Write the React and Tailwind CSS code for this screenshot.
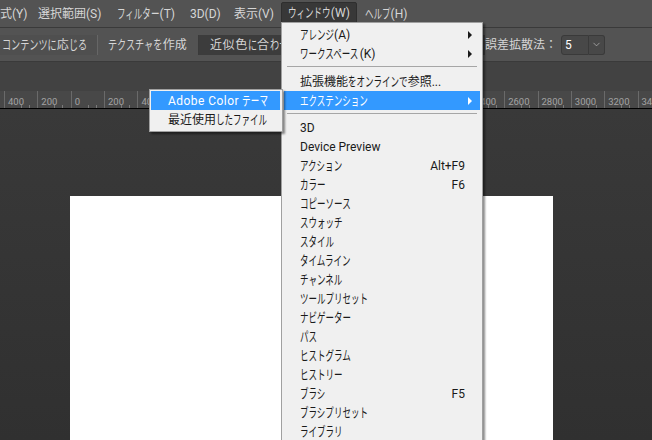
import { ChevronDown } from 'lucide-react'

const font = { fontFamily: 'Roboto, "Noto Sans CJK JP", sans-serif' }

const topMenus = [
  { label: '式(Y)', width: 'w-[38px]' },
  { label: '選択範囲(S)', width: 'w-[79px]' },
  { label: 'フィルター(T)', width: 'w-[73px]' },
  { label: '3D(D)', width: 'w-[44px]' },
  { label: '表示(V)', width: 'w-[47px]' },
]

// labels from 600 to 2200 sit behind the open menus, so they stay empty
const rulerLabels = ['400', '200', '0', '200', '400', '', '', '', '', '', '', '', '', '', '2400', '2600', '2800', '3000', '3200', '3400']

const windowGroupOne = [
  { label: 'アレンジ(A)', arrow: true },
  { label: 'ワークスペース(K)', arrow: true },
]

const panelItems = [
  { label: '3D' },
  { label: 'Device Preview' },
  { label: 'アクション', shortcut: 'Alt+F9' },
  { label: 'カラー', shortcut: 'F6' },
  { label: 'コピーソース' },
  { label: 'スウォッチ' },
  { label: 'スタイル' },
  { label: 'タイムライン' },
  { label: 'チャンネル' },
  { label: 'ツールプリセット' },
  { label: 'ナビゲーター' },
  { label: 'パス' },
  { label: 'ヒストグラム' },
  { label: 'ヒストリー' },
  { label: 'ブラシ', shortcut: 'F5' },
  { label: 'ブラシプリセット' },
  { label: 'ライブラリ' },
]

const Jp = ({ text, wide }) => (
  <>
    {text.split(/([\u3040-\u30ff]+)/).map((part, i) =>
      i % 2 === 1 ? (
        <span
          key={i}
          className={`inline-block origin-left text-[13px] leading-none ${wide ? 'scale-x-[0.7]' : 'scale-x-[0.655]'}`}
          style={{ width: part.length * (wide ? 9.12 : 8.52) }}
        >
          {part}
        </span>
      ) : (
        part
      )
    )}
  </>
)

const MenuRow = ({ label, shortcut, arrow, active, sub, spaced }) => (
  <div className={`flex items-center h-[19px] text-[12px] leading-[17px] whitespace-nowrap ${sub ? 'pl-[17px]' : 'pl-[16px]'} ${active ? 'bg-[#3399ff] text-white' : 'text-[#1a1a1a]'}`}>
    <span className={`flex-1 pt-[2px] ${spaced ? 'tracking-[0.45px]' : ''}`}><Jp text={label} /></span>
    {shortcut && <span className="mr-[15px] pt-[2px]">{shortcut}</span>}
    {arrow && <span className="mr-[8px] w-0 h-0 border-y-[4px] border-y-transparent border-l-[4px] border-l-current" />}
  </div>
)

const App = () => {
  return (
    <div className="relative w-[652px] h-[440px] overflow-hidden bg-[#2f2f2f]" style={font}>
      {/* Menu bar */}
      <div className="flex items-center h-[28px] bg-[#535353] border-b border-[#3a3a3a] text-[12px] text-[#d6d6d6] overflow-hidden">
        {topMenus.map((item) => (
          <span key={item.label} className={`${item.width} shrink-0 whitespace-nowrap`}><Jp text={item.label} /></span>
        ))}
        <span className="flex items-center justify-center w-[76px] h-[22px] mt-[-1px] shrink-0 whitespace-nowrap bg-[#383838] border border-[#2e2e2e] rounded-t-[2px]"><span><Jp text="ウィンドウ(W)" /></span></span>
        <span className="ml-[8px] whitespace-nowrap"><Jp text="ヘルプ(H)" /></span>
      </div>

      {/* Options bar */}
      <div className="flex items-center h-[34px] bg-[#535353] border-b border-[#3a3a3a] text-[12px] text-[#d6d6d6]">
        <span className="flex items-center pl-[2px] w-[98px] h-[20px] bg-[#4f4f4f] border-r border-[#666666] whitespace-nowrap overflow-hidden"><span><Jp text="コンテンツに応じる" wide /></span></span>
        <span className="flex items-center pl-[10px] w-[101px] h-[20px] bg-[#535353] border-r border-[#3a3a3a] whitespace-nowrap"><span><Jp text="テクスチャを作成" wide /></span></span>
        <span className="flex items-center pl-[11px] w-[286px] h-[20px] shrink-0 bg-[#3c3c3c] tracking-[0.6px] whitespace-nowrap"><span><Jp text="近似色に合わせる" wide /></span></span>
        <span className="w-[76px] shrink-0 whitespace-nowrap">誤差拡散法：</span>
        <span className="flex items-center w-[28px] h-[20px] shrink-0 bg-[#484848] border border-[#3a3a3a] rounded-l-[3px] pl-[3px] text-white">5</span>
        <span className="flex items-center justify-center w-[16px] h-[20px] shrink-0 bg-[#484848] border-y border-r border-[#3a3a3a] rounded-r-[3px]">
          <ChevronDown size={11} strokeWidth={1.5} className="text-[#bdbdbd]" />
        </span>
      </div>

      {/* Empty tab strip */}
      <div className="h-[29px] bg-[#424242]" />

      {/* Ruler */}
      <div className="flex h-[18px] pl-[4px] bg-[#484848] border-b border-black overflow-hidden">
        {rulerLabels.map((label, i) => (
          <div key={i} className="relative flex w-[33.35px] shrink-0 border-l border-[#6a6a6a] pl-[3px] text-[9.5px] leading-[22px] text-[#a3a3a3]">
            {label}
            <span className="absolute bottom-0 left-[16px] w-px h-[3px] bg-[#7a7a7a]" />
            <span className="absolute bottom-0 left-[24px] w-px h-[3px] bg-[#7a7a7a]" />
          </div>
        ))}
      </div>

      {/* Document canvas */}
      <div className="pl-[70px] pt-[87px] h-[331px] bg-gradient-to-b from-[#393939] to-[#303030]">
        <div className="w-[483px] h-[300px] bg-white" />
      </div>

      {/* ウィンドウ menu */}
      <div className="absolute left-[281px] top-[22px] w-[202px] h-[430px] bg-[#f0f0f0] border border-[#a0a0a0] shadow-[2px_2px_2px_rgba(0,0,0,0.45)] p-[2px]">
        {windowGroupOne.map((row) => <MenuRow key={row.label} {...row} />)}
        <div className="h-[1px] bg-[#a6a6a6] mx-[3px] mt-[3px] mb-[5px]" />
        <MenuRow label="拡張機能をオンラインで参照..." />
        <MenuRow label="エクステンション" arrow active />
        <div className="h-[1px] bg-[#a6a6a6] mx-[3px] mt-[3px] mb-[4px]" />
        {panelItems.map((row) => <MenuRow key={row.label} {...row} />)}
      </div>

      {/* エクステンション submenu */}
      <div className="absolute left-[149px] top-[89px] w-[134px] h-[43px] bg-[#f0f0f0] border border-[#a0a0a0] shadow-[2px_2px_2px_rgba(0,0,0,0.45)] pl-[1px] pr-[2px] py-[1px]">
        <MenuRow label="Adobe Color テーマ" active sub spaced />
        <MenuRow label="最近使用したファイル" sub />
      </div>
    </div>
  )
}

export default App
